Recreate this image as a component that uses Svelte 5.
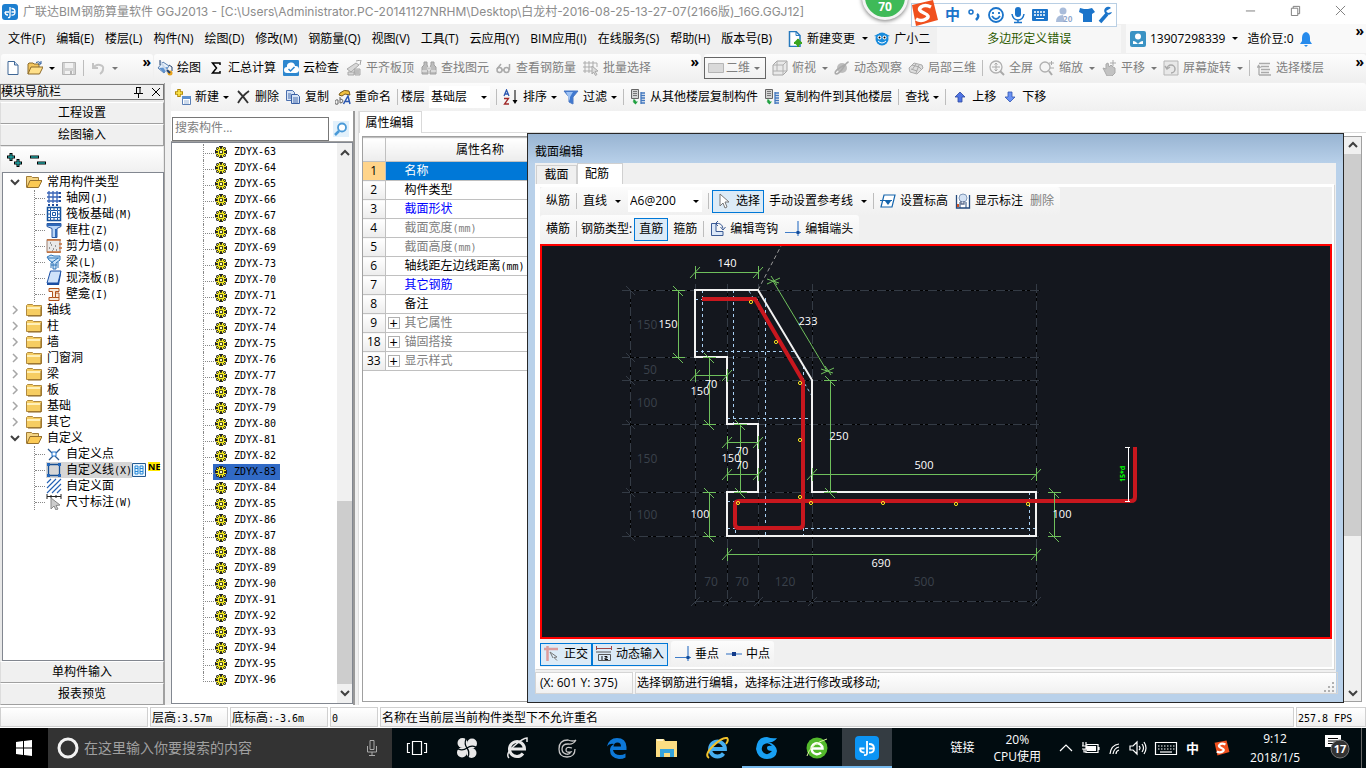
<script>
  const menus = ['文件(F)', '编辑(E)', '楼层(L)', '构件(N)', '绘图(D)', '修改(M)', '钢筋量(Q)', '视图(V)', '工具(T)', '云应用(Y)', 'BIM应用(I)', '在线服务(S)', '帮助(H)', '版本号(B)'];

  const icons = {
    logo: '<rect width="16" height="16" rx="3" fill="#1d7fd0"/><path d="M8 3v9q0 2-2 1.500M3 8h4M3 8q0 3 3 3M9.500 8H13M9.500 4.500Q13 4.500 13 8t-3.500 3" fill="none" stroke="#fff" stroke-width="1.300"/>',
    page: '<path d="M3 1.500h6.500L13 5v9.500H3z" fill="#fff" stroke="#3f6796"/><path d="M9.500 1.500V5H13" fill="#cfe0f3" stroke="#3f6796"/>',
    open: '<path d="M1 14V4l1-1h4l1 1h5v3" fill="#f3c65e" stroke="#8c6a2b"/><path d="M1 14l3-7h12l-3.500 7z" fill="#ffe08a" stroke="#8c6a2b"/><path d="M9 2.500q3-2 5 1M14 1v3h-3" fill="none" stroke="#2e5f9e"/>',
    save: '<path d="M1.500 2.500h13v12h-13z" fill="#d2d2d2" stroke="#b5b5b5"/><path d="M4 3h8v5H4zM4 11h8v3H4z" fill="#f2f2f2"/><path d="M9 11h2v3H9z" fill="#b5b5b5"/>',
    undo: '<path d="M3 3v5h5M3 8q3-4 7-3t3 4q0 3-3 5" fill="none" stroke="#c4c4c4" stroke-width="2"/>',
    draw: '<path d="M6 2l6 4-5 7-6-5z" fill="#e6f0fa" stroke="#5a80b0"/><path d="M2 8l9-1-4 6z" fill="#5d92d0"/><path d="M3 1l8 12" stroke="#c9d8ea" stroke-width="2"/><path d="M3 0v5M12 5l3 2v4" stroke="#25436e" fill="none"/><circle cx="13" cy="13" r="2.500" fill="#e8a21a"/><path d="M10 10l3 3" stroke="#25436e" stroke-width="2"/>',
    sigma: '<path d="M12 5V3H4.500L8.500 8l-4 5H12v-2" fill="none" stroke="#000" stroke-width="1.500"/>',
    cloud: '<rect width="16" height="16" rx="1" fill="#2d87cf"/><path d="M4 13a3 3 0 0 1 0-6 4 4 0 0 1 8-1 3.500 3.500 0 0 1 1 7z" fill="#fff"/><path d="M5.500 9l2 2 4-4" fill="none" stroke="#2d87cf" stroke-width="1.500"/>',
    flush: '<path d="M1 9l9-6 3 2-8 7zM2 12h6v3H2zM8 9h6v6H9z" fill="#d8d8d8" stroke="#a8a8a8"/><path d="M10 1l5-1-1 5M10 10v4M12 10v4" stroke="#a0a0a0" fill="none"/>',
    find: '<path d="M3 2h3v3l1 2v7H1V7l2-2zM10 2h3v3l2 2v7H9V7l1-2z" fill="#bdbdbd" stroke="#a0a0a0"/><path d="M7 7h2v3H7zM1 11h5M10 11h5" fill="#999" stroke="#f5f5f5"/>',
    glasses: '<circle cx="3.500" cy="10" r="2.500" fill="none" stroke="#aaa" stroke-width="1.500"/><circle cx="10.500" cy="10" r="2.500" fill="none" stroke="#aaa" stroke-width="1.500"/><path d="M6 10h2M1 9l4-5M13.500 10V4" fill="none" stroke="#aaa" stroke-width="1.500"/>',
    batch: '<path d="M2 1v12M6 1v12M10 1v9M0 3h14M0 7h10M0 11h9M14 3v4" stroke="#adadad" fill="none"/><path d="M9 6l6 5-3 .5 2 3-1.500 1-2-3.500L9 14z" fill="#ddd" stroke="#aaa"/>',
    rect: '<path d="M.5 3.500h15v9H.5z" fill="#d9d9d9" stroke="#b5b5b5"/>',
    cube: '<path d="M1 5l4-4h10v10l-4 4H1z" fill="#e9e9e9" stroke="#a5a5a5"/><path d="M1 5h10v10M11 5l4-4M5 1v10H1M5 11h10" fill="none" stroke="#b0b0b0"/>',
    orbit: '<circle cx="8" cy="8" r="5" fill="#bdbdbd"/><path d="M2 14q-3-2 5-7t7-5-5 6-7 6z" fill="none" stroke="#aaa" stroke-width="1.500"/>',
    part3d: '<path d="M1 8l5-5 8 2 1 3-6 6-7-2z" fill="#ddd" stroke="#aaa"/><path d="M4 5l7 2 3 3M3 9l6 2M8 4L4 10M11 5l-3 8" stroke="#a8a8a8" fill="none"/>',
    full: '<circle cx="7" cy="7" r="6" fill="#f5f5f5" stroke="#b0b0b0" stroke-width="1.300"/><path d="M7 3v8M3 7h8M5.500 4.500L7 3l1.500 1.500M5.500 9.500L7 11l1.500-1.500" stroke="#aaa" fill="none"/><path d="M11 11l4 4" stroke="#aaa" stroke-width="2"/>',
    zoom: '<circle cx="6" cy="7" r="5" fill="#f5f5f5" stroke="#b0b0b0" stroke-width="1.300"/><path d="M10 11l3 4" stroke="#aaa" stroke-width="2"/><path d="M10 3h5M12.500 1v4M11 8h4" stroke="#aaa"/>',
    pan: '<path d="M2 8l3 1V4l2-1 1 4 2-2 2 2 2 1v5l-3 3H6z" fill="#c2c2c2" stroke="#aaa"/><path d="M12 0v6M9 3h6" stroke="#aaa"/>',
    rotate: '<path d="M1 1h14v14H1z" fill="#e8e8e8" stroke="#b5b5b5"/><path d="M4 9a4 4 0 1 1 4 4M2 6l2 3 3-2" fill="none" stroke="#aaa" stroke-width="1.500"/>',
    floors: '<path d="M3 3.500h11M1 7h3l-2-2M5 6.500h8M5 9.500h9M5 12.500h8M3 15h12M3 7v8" stroke="#aaa" fill="none" stroke-width="1.300"/>',
    create: '<path d="M4 0v8M0 4h8" stroke="#b28a08" stroke-width="3.500"/><path d="M4 1v6M1 4h6" stroke="#ffe84a" stroke-width="1.600"/><path d="M7.500 7.500h8v8h-8z" fill="#fff" stroke="#5b7fb5"/><path d="M7 7h9v3H7z" fill="#5b8fd0"/><path d="M9 12h5M9 14h5" stroke="#9ab5d8"/>',
    cross: '<path d="M3 2q5 5 10 12M14 2Q7 7 3 14" stroke="#333" stroke-width="1.800" fill="none"/>',
    copy: '<path d="M1.500 1.500h6l2 2v8h-8z" fill="#d6e4f7" stroke="#4a6fae"/><path d="M6.500 5.500h6l2 2v7h-8z" fill="#d6e4f7" stroke="#3a60a4"/><path d="M8 9h5M8 11h5M8 13h5M3 5h3M3 7h3M3 9h3" stroke="#4a6fae"/>',
    rename: '<path d="M5 4q4-4 9-2l1 4-5-1-3 2-3-1z" fill="#f0c040" stroke="#7a5a1a"/><path d="M0 14q0-4 3-3v4q-3 1-3-1M5 8v6q3 0 3-2t-3-2" fill="none" stroke="#666"/><path d="M8.500 15l4.500-8 2 8M10.500 12.500h4" fill="none" stroke="#2a57b0" stroke-width="1.500"/>',
    sort: '<path d="M1 7l2.500-6L6 7M2 5h3" fill="none" stroke="#2a57b0" stroke-width="1.300"/><path d="M1 9.500h4.500L1.500 15h4.500" fill="none" stroke="#a02828" stroke-width="1.300"/><path d="M12 1v11" stroke="#000"/><path d="M9.500 11h5L12 15z"/>',
    filter: '<path d="M1 2h14l-5 6v7l-4-2V8z" fill="#3f78d0" stroke="#4a78c4"/><path d="M3 3h7L7 8v4" fill="#9dc2f4"/>',
    fcopy: '<path d="M1.500.5h7v9h-7z" fill="#d4d4d4" stroke="#666"/><path d="M3 2.500h4M3 4.500h4M3 6.500h4" stroke="#777"/><path d="M11 3v12M11 4h4M11 6.500h4M11 9h4M11 11.500h4M11 14h4" stroke="#4277be" stroke-width="1.300"/><path d="M3 10.500h2l1 2h2l-2.500 3-3-3h1z" fill="#20a040"/>',
    up: '<path d="M8 3l5 5h-3v5H6V8H3z" fill="#4f74e4" stroke="#2d499e" stroke-width=".8"/>',
    down: '<path d="M8 13L3 8h3V3h4v5h3z" fill="#6a92f4" stroke="#3457ae" stroke-width=".8"/>',
    newchg: '<path d="M2.500.5H9l4 4v11H2.500z" fill="#fff" stroke="#2779bd" stroke-width="1.500"/><path d="M9 .5v4h4" fill="none" stroke="#2779bd"/><path d="M11 7.500l4 4-4 4-4-4z" fill="#3ca51e"/><path d="M11 8v8M7 12h8" stroke="#3ca51e" stroke-width="2"/>',
    owl: '<circle cx="8" cy="8" r="6.500" fill="#188bdc"/><path d="M0 5l4-2v3zM16 5l-4-2v3z" fill="#188bdc"/><circle cx="5.500" cy="6.500" r="2" fill="#fff"/><circle cx="10.500" cy="6.500" r="2" fill="#fff"/><circle cx="5.500" cy="6.500" r="1"/><circle cx="10.500" cy="6.500" r="1"/><path d="M4 10q4 4 8 0" stroke="#fff" fill="none"/>',
    user: '<rect width="16" height="16" rx="2" fill="#3b93c4"/><circle cx="8" cy="5.500" r="3" fill="#fff"/><path d="M3 10l5 1 5-1v3H3z" fill="#fff"/><path d="M5 10l3 3 3-3" fill="#3b93c4"/>',
    bell: '<path d="M8 1q4 1 4 6v3l2 3H2l2-3V7q0-5 4-6z" fill="#278bec"/><path d="M6 14h4l-2 2z" fill="#278bec"/>',
    search: '<path d="M0 0h16v16H0z" fill="#e3f1fb"/><circle cx="9" cy="6.500" r="4" fill="#fff" stroke="#4a9ad8" stroke-width="1.800"/><path d="M6 10l-4 4" stroke="#4a9ad8" stroke-width="2.500"/>',
    folder: '<path d="M.5 13.500v-10l1-1h5l1 1h8v10z" fill="#f6cd62" stroke="#b08a40"/><path d="M1 5h14v2H1z" fill="#fff0b8"/><path d="M15 5v9H2" fill="none" stroke="#8b6520"/>',
    folderOpen: '<path d="M.5 13.500v-11h5l1 1h6v3" fill="#f4d483" stroke="#a17c37"/><path d="M1 13.500l3-7h12l-3.500 7z" fill="#fbc954" stroke="#94702f"/>',
    grid: '<path d="M1 3h12M1 7h12M1 11h12M3 1v12M7 1v12M11 1v12" stroke="#3a66b8" stroke-width="1.300"/><path d="M2 15h2M6 15h2M10 15h2M14 2v2M14 6v2M14 10v2" stroke="#204c9c" stroke-width="2"/>',
    raft: '<path d="M1.500 1.500h13v13h-13z" fill="#fff" stroke="#12509c" stroke-width="1.500"/><path d="M4.500 4.500h7v7h-7zM6.500 6.500h3v3h-3zM4.500 1v3M8 1v3M11.500 1v3M4.500 12v3M8 12v3M11.500 12v3M1 4.500h3M1 8h3M1 11.500h3M12 4.500h3M12 8h3M12 11.500h3" fill="none" stroke="#1d5ca8"/>',
    column: '<path d="M1 1.500h14v3l-4 2v9H6v-9l-5-2z" fill="#b9d5f6" stroke="#2a5aa4"/><path d="M1 2h14v2H1zM9 7h2v8H9z" fill="#2f69b8"/>',
    wall: '<path d="M1 1.500h13v13H1z" fill="#e9e9e9" stroke="#9b7c6c"/><path d="M3 10h1M5 7h1M7 11h1M9 8h1M6 13h1M10 12h1M4 5h1" stroke="#444"/><path d="M1 2h14M1 14h14M13 6h3M13 10h3" stroke="#c7703a" stroke-width="1.300"/>',
    beam: '<path d="M1 3l4-2 3 1h6v4l-4 3v6H7V9L3 6z" fill="#c8e2f8" stroke="#2c74b8"/><path d="M2 4h11M12 4L5 9v5M12 8v6M5 11h6" stroke="#2c74b8" fill="none"/>',
    slab: '<path d="M4.500 1H15l-3 12H1z" fill="#cfe2fa" stroke="#1a4fa4"/><path d="M1 13h11l3-12v3l-2 11H1z" fill="#1a4fa4"/>',
    niche: '<path d="M3 2.500h10v3H9.500v1.500H13v7.500H3v-3h3.500v-6H3z" fill="#f8ead8" stroke="#b0521a"/><path d="M6.500 11.500H13M9.500 7v4" stroke="#b0521a"/>',
    cpoint: '<path d="M2 3l4 4M14 3l-4 4M3 14l4-4M13 14l-4-4" stroke="#2c5a90" stroke-width="1.300"/><path d="M6 6h4v4H6z" fill="#fff" stroke="#2277d0"/>',
    cline: '<path d="M2.500 2.500h11v11h-11z" fill="none" stroke="#174f94" stroke-width="1.300"/><path d="M1 1h3v3H1zM12 1h3v3h-3zM1 12h3v3H1zM12 12h3v3h-3z" fill="#2568bc"/>',
    cface: '<path d="M1 5l4-4M1 10l9-9M1 15L15 1M6 15l9-9M11 15l4-4" stroke="#2360b4" stroke-width="1.100"/>',
    dimw: '<path d="M1 0v5M1 2.500h14M15 0v5M5 1v3M10 1v3" stroke="#222"/><path d="M5 4l9 7-4 .5 2 3.500-2 1-2-4-3 3z" fill="#ccc" stroke="#888"/>',
    gear: '<path d="M6 2h4v1.500l2-.5 1 1-.5 2H14v4h-1.500l.5 2-1 1-2-.5V14H6v-1.500L4 13l-1-1 .5-2H2V6h1.500L3 4l1-1 2 .5z" fill="#222"/><path d="M6 3h1v2H6zM9 3h1v2H9zM6 11h1v2H6zM9 11h1v2H9zM3 6h2v1H3zM3 9h2v1H3zM11 6h2v1h-2zM11 9h2v1h-2zM4 4h1v1H4zM11 4h1v1h-1zM4 11h1v1H4zM11 11h1v1h-1z" fill="#f6ee20"/><path d="M5.500 5.500h5v5h-5z" fill="none" stroke="#f6ee20" stroke-width="1.300"/><path d="M7 7h2v2H7z" fill="#fffbc0"/>',
    arrow: '<path d="M4 1v12l3-3 2 5 2-1-2-5h4z" fill="#fff" stroke="#777"/>',
    elev: '<path d="M4 2h11l-3 12H1z" fill="#fff" stroke="#1464ac" stroke-width="1.200"/><path d="M0 7.500h12" stroke="#1464ac"/><path d="M5 8h6l-3 4z" fill="#1464ac"/>',
    showdim: '<path d="M1.500 2v13h13V2" fill="#fff" stroke="#254a7c" stroke-width="1.300"/><path d="M5 9v6M11 9v6" stroke="#254a7c"/><circle cx="8" cy="5" r="4" fill="#d4e2f4" stroke="#8098b8"/><path d="M6 8v3h3V8" fill="none" stroke="#607090" stroke-width="1.300"/><path d="M2 11h2v3H2z" fill="#d05020"/>',
    hook: '<path d="M1.500 2.500H6v8h7v4H1.500z" fill="#dce8f8" stroke="#3b5a94"/><path d="M6 2.500q6-1 7 5M10.500 6l2.500 3 2.500-3M8 0L5.500 2.500 8 5" fill="none" stroke="#3b5a94"/>',
    perp: '<path d="M13 0v15M0 11.500h16" stroke="#3f7cc8" stroke-width="1.200"/><path d="M11.500 10h3v3h-3z" fill="#134c9a"/>',
    mid: '<path d="M0 8h16" stroke="#5a8ccc" stroke-width="1.300"/><path d="M6 6h4v4H6z" fill="#123a8a"/>',
    ortho: '<path d="M0 3h14M3.500 0v15" stroke="#dc9c9c" stroke-width="2.500"/><path d="M6 6l7 5-3 .5 3 3M6 6l3 6" fill="none" stroke="#777"/>',
    dyn: '<path d="M.5 0v4M.5 2.500h15M15.500 0v4" stroke="#a04444"/><path d="M0 6h15M2.500 8.500h12v6h-12z" fill="none" stroke="#555"/><path d="M6 10v4M8.500 10.500H11v1.500H9v1.500h3" stroke="#111" fill="none"/>'
  };

  const drawTools = [['draw', '绘图'], ['sigma', '汇总计算'], ['cloud', '云检查'], ['flush', '平齐板顶', 1], ['find', '查找图元', 1], ['glasses', '查看钢筋量', 1], ['batch', '批量选择', 1]];

  const parts = [['grid', '轴网', '(J)'], ['raft', '筏板基础', '(M)'], ['column', '框柱', '(Z)'], ['wall', '剪力墙', '(Q)'], ['beam', '梁', '(L)'], ['slab', '现浇板', '(B)'], ['niche', '壁龛', '(I)']];
  const folders = ['轴线', '柱', '墙', '门窗洞', '梁', '板', '基础', '其它'];
  const custom = [['cpoint', '自定义点', ''], ['cline', '自定义线', '(X)'], ['cface', '自定义面', ''], ['dimw', '尺寸标注', '(W)']];
  const members = [63, 64, 65, 66, 67, 68, 69, 73, 70, 71, 72, 74, 75, 76, 77, 78, 79, 80, 81, 82, 83, 84, 85, 86, 87, 88, 89, 90, 91, 92, 93, 94, 95, 96];
  let selected = $state(83);

  const props = [
    [1, '名称', '', 'sel'], [2, '构件类型', '', ''], [3, '截面形状', '', 'blue'], [4, '截面宽度', '(mm)', 'dim'], [5, '截面高度', '(mm)', 'dim'],
    [6, '轴线距左边线距离', '(mm)', ''], [7, '其它钢筋', '', 'blue'], [8, '备注', '', ''], [9, '其它属性', '', 'dim group'], [18, '锚固搭接', '', 'dim group'], [33, '显示样式', '', 'dim group']
  ];

  const gx = [695, 727, 758, 812, 1036];
  const gy = [290, 357, 380, 424, 492, 536];
  const greyText = [[647, 325, '150'], [650, 370, '50'], [647, 403, '100'], [647, 459, '150'], [647, 515, '100'], [711, 582, '70'], [742, 582, '70'], [785, 582, '120'], [924, 582, '500']];
  const hDims = [[695, 758, 272], [695, 727, 375], [727, 758, 442], [727, 758, 474], [812, 1036, 474], [727, 1036, 554]];
  const vDims = [[678, 290, 357], [709, 357, 424], [740, 424, 492], [830, 380, 492], [709, 492, 536], [1054, 492, 536]];
  const dimText = [[727, 263, '140'], [668, 324, '150'], [700, 391, '150'], [711, 384, '70'], [731, 458, '150'], [742, 451, '70'], [742, 465, '70'], [924, 465, '500'], [839, 436, '250'], [700, 514, '100'], [1062, 514, '100'], [881, 563, '690'], [808, 321, '233']];
  const dots = [[751, 302], [776, 342], [800, 383], [800, 440], [800, 497], [738, 503], [811, 503], [883, 503], [956, 504], [1028, 504]];
</script>

{#snippet icon(name)}
  <svg class="ic" viewBox="0 0 16 16" aria-hidden="true">{@html icons[name]}</svg>
{/snippet}

{#snippet tool(name, label, off, caret)}
  <button class="tool" class:off>
    {#if name}{@render icon(name)}{/if}<span>{label}</span>{#if caret}<i class="caret"></i>{/if}
  </button>
{/snippet}

{#snippet chevron(dir)}
  <svg class="chev" viewBox="0 0 10 10" aria-hidden="true"><path d={dir === 'up' ? 'M1 7l4-4 4 4' : dir === 'down' ? 'M1 3l4 4 4-4' : 'M3 1l4 4-4 4'} /></svg>
{/snippet}

<div class="app">
  <header class="title">
    {@render icon('logo')}
    <span>广联达BIM钢筋算量软件 GGJ2013 - [C:\Users\Administrator.PC-20141127NRHM\Desktop\白龙村-2016-08-25-13-27-07(2166版)_16G.GGJ12]</span>
    <div class="winbtns">
      <button aria-label="最小化"><svg viewBox="0 0 12 12"><path d="M1 6.500h10" /></svg></button>
      <button aria-label="还原"><svg viewBox="0 0 12 12"><path d="M1.500 3.500h7v8h-7zM3.500 3.500v-2h7v8h-2" /></svg></button>
      <button aria-label="关闭"><svg viewBox="0 0 12 12"><path d="M1 1l10 10M11 1L1 11" /></svg></button>
    </div>
  </header>

  <div class="ball">70</div>
  <div class="ime">
    <svg viewBox="0 0 208 28" width="208" height="28">
      <path d="M1 5l21-5 5 20-22 6z" fill="#f0501e" />
      <path d="M20 7q-6-3-10 0t3 6 2 6-10 0" fill="none" stroke="#fff" stroke-width="3.500" />
      <text x="34" y="20" font-size="15" font-weight="700" fill="#1b74ca">中</text>
      <circle cx="60" cy="12" r="2" fill="none" stroke="#1b74ca" stroke-width="1.500" /><path d="M66 14q3 2-1 6" fill="none" stroke="#1b74ca" stroke-width="2.500" />
      <g fill="none" stroke="#1b74ca" stroke-width="1.800"><circle cx="85" cy="15" r="7" /><path d="M81 16q4 6 8 0M82 12v2M88 12v2" /></g>
      <rect x="104" y="7" width="6" height="10" rx="3" fill="#1b74ca" /><path d="M101 14q1 6 6 6t6-6M107 20v3M103 22.500h8" fill="none" stroke="#1b74ca" stroke-width="1.500" />
      <rect x="121" y="9" width="16" height="12" rx="1" fill="#1b74ca" /><path d="M123 12h12M123 15h12" stroke="#fff" stroke-width="1.300" stroke-dasharray="2 1" /><path d="M125 18.500h8" stroke="#fff" />
      <circle cx="152" cy="11" r="3.500" fill="#a9bcda" /><path d="M145 22q0-7 7-7l2 7z" fill="#a9bcda" /><text x="152" y="22" font-size="8" font-weight="700" fill="#8fa6cc">20</text>
      <path d="M171 8l4 1h4l4-1 3 4-3 2v8h-9v-8l-4-2z" fill="#1b74ca" transform="translate(-2)" />
      <path d="M189 22l7-8" stroke="#1b74ca" stroke-width="3.500" /><path d="M200 8a4 4 0 1 0 1 4l-4 1-2-2z" fill="#1b74ca" />
    </svg>
  </div>

  <nav class="menu">
    {#each menus as m}<button>{m}</button>{/each}
    <div class="extras">
      <button class="wi">{@render icon('newchg')}<span>新建变更</span><i class="caret"></i></button>
      <button class="wi">{@render icon('owl')}<span>广小二</span></button>
    </div>
    <span class="error">多边形定义错误</span>
    <div class="account">
      <button class="wi">{@render icon('user')}<span>13907298339</span><i class="caret"></i></button>
      <button class="wi"><span>造价豆:0</span>{@render icon('bell')}</button>
      <b class="more">»</b>
    </div>
  </nav>

  <div class="bar upper">
    <div class="seg first">
      <button class="tool" aria-label="新建">{@render icon('page')}</button>
      <button class="tool" aria-label="打开">{@render icon('open')}<i class="caret"></i></button>
      <button class="tool off" aria-label="保存">{@render icon('save')}</button>
      <i class="sep"></i>
      <button class="tool off" aria-label="撤销">{@render icon('undo')}<i class="caret"></i></button>
      <b class="more">»</b>
    </div>
    <div class="seg second">
      {#each drawTools as [n, l, o]}{@render tool(n, l, o, false)}{/each}
      <b class="more">»</b>
    </div>
    <div class="seg third">
      <button class="tool off boxed">{@render icon('rect')}<span>二维</span><i class="caret"></i></button>
      {@render tool('cube', '俯视', true, true)}
      {@render tool('orbit', '动态观察', true, false)}
      {@render tool('part3d', '局部三维', true, false)}
      <i class="sep"></i>
      {@render tool('full', '全屏', true, false)}
      {@render tool('zoom', '缩放', true, true)}
      {@render tool('pan', '平移', true, true)}
      {@render tool('rotate', '屏幕旋转', true, true)}
      <i class="sep"></i>
      {@render tool('floors', '选择楼层', true, false)}
      <b class="more">»</b>
    </div>
  </div>

  <main>
    <aside class="nav">
      <div class="navhead">
        <span>模块导航栏</span>
        <svg viewBox="0 0 28 12" width="28" height="12"><path d="M3 1.500h5M3.500 1v6M7 1v6M1 7.500h9M5.500 8v4M19 2l8 8M27 2l-8 8" fill="none" stroke="#000" /></svg>
      </div>
      <button class="wide">工程设置</button>
      <button class="wide">绘图输入</button>
      <div class="plus">
        <svg viewBox="0 0 42 16" width="42" height="16"><path d="M1 5h8M5 1v8M8 11h8M12 7v8M24 5h9M31 11h9" stroke="#000" stroke-width="3" /><path d="M2 5h6M5 2v6M9 11h6M12 8v6M25 5h7M32 11h7" stroke="#20a0a0" stroke-width="1.300" /></svg>
      </div>
      <div class="tree">
        <div class="row">{@render chevron('down')}{@render icon('folderOpen')}<span>常用构件类型</span></div>
        <div class="kids">
          {#each parts as [n, l, k]}<div class="row">{@render icon(n)}<span>{l}<code>{k}</code></span></div>{/each}
        </div>
        {#each folders as f}<div class="row closed">{@render chevron('right')}{@render icon('folder')}<span>{f}</span></div>{/each}
        <div class="row">{@render chevron('down')}{@render icon('folderOpen')}<span>自定义</span></div>
        <div class="kids">
          {#each custom as [n, l, k], i}
            <div class="row">
              <span class="lab" class:cur={i === 1}>{@render icon(n)}<span>{l}<code>{k}</code></span></span>
              {#if i === 1}<svg viewBox="0 0 14 14" class="mini"><path d="M.5.5h13v13H.5z" fill="#eaf5fd" stroke="#245a90" /><path d="M3 3h3v8H3zM8 3h3v8H8zM3 5.500h3M3 8.500h3M8 5.500h3M8 8.500h3" fill="none" stroke="#2588d8" /></svg><em>NE</em>{/if}
            </div>
          {/each}
        </div>
      </div>
      <button class="wide">单构件输入</button>
      <button class="wide">报表预览</button>
    </aside>

    <div class="work">
      <div class="bar lower">
        {@render tool('create', '新建', false, true)}
        {@render tool('cross', '删除', false, false)}
        {@render tool('copy', '复制', false, false)}
        {@render tool('rename', '重命名', false, false)}
        <i class="sep"></i>
        <label for="floor">楼层</label>
        <span class="combo"><select id="floor"><option>基础层</option></select><i class="caret"></i></span>
        <i class="sep"></i>
        {@render tool('sort', '排序', false, true)}
        {@render tool('filter', '过滤', false, true)}
        <i class="sep"></i>
        {@render tool('fcopy', '从其他楼层复制构件', false, false)}
        {@render tool('fcopy', '复制构件到其他楼层', false, false)}
        <i class="sep"></i>
        {@render tool('', '查找', false, true)}
        <i class="sep"></i>
        {@render tool('up', '上移', false, false)}
        {@render tool('down', '下移', false, false)}
      </div>
      <div class="cols">
        <section class="members">
          <div class="find"><input type="text" placeholder="搜索构件..." aria-label="搜索构件" /><button aria-label="搜索">{@render icon('search')}</button></div>
          <div class="listbox">
            <ul>
              {#each members as m}<li><button class:cur={m === selected} onclick={() => (selected = m)}>{@render icon('gear')}<span>ZDYX-{m}</span></button></li>{/each}
            </ul>
            <div class="scroll">{@render chevron('up')}<div class="track"><div class="thumb"></div></div>{@render chevron('down')}</div>
          </div>
        </section>

        <section class="attrs">
          <div class="tabline"><button class="proptab">属性编辑</button></div>
          <div class="sheet">
            <table>
              <colgroup><col class="c1" /><col class="c2" /><col /></colgroup>
              <thead><tr><th></th><th>属性名称</th><th></th></tr></thead>
              <tbody>
                {#each props as [n, l, u, c]}
                  <tr class={c}><th scope="row">{n}</th><td>{#if c.includes('group')}<i class="exp">+</i>{/if}{l}<code>{u}</code></td><td></td></tr>
                {/each}
              </tbody>
            </table>
            <div class="scroll outer">{@render chevron('up')}<div class="track"></div>{@render chevron('down')}</div>
          </div>
        </section>
      </div>
    </div>

    <section class="dialog">
      <h2>截面编辑</h2>
      <div class="inner">
        <div class="tabs"><button>截面</button><button class="on">配筋</button></div>
        <div class="pane">
          <div class="bar d1">
            {@render tool('', '纵筋', false, false)}
            <i class="sep"></i>
            {@render tool('', '直线', false, true)}
            <span class="combo spec"><select aria-label="钢筋规格"><option>A6@200</option></select><i class="caret"></i></span>
            <i class="sep"></i>
            <button class="tool pressed">{@render icon('arrow')}<span>选择</span></button>
            {@render tool('', '手动设置参考线', false, true)}
            <i class="sep"></i>
            {@render tool('elev', '设置标高', false, false)}
            {@render tool('showdim', '显示标注', false, false)}
            {@render tool('', '删除', true, false)}
          </div>
          <div class="bar d2">
            {@render tool('', '横筋', false, false)}
            <i class="sep"></i>
            <span>钢筋类型:</span>
            <button class="tool pressed">直筋</button>
            {@render tool('', '箍筋', false, false)}
            <i class="sep"></i>
            {@render tool('hook', '编辑弯钩', false, false)}
            {@render tool('perp', '编辑端头', false, false)}
          </div>
          <div class="canvas">
            <svg viewBox="542 246 788 391" preserveAspectRatio="xMinYMin meet">
              <g class="axis">
                {#each gx as x}<path class="k" d="M{x}.5 284V606" /><path class="g" d="M{x}.5 284V606" /><path class="t" d="M{x - 4} 606l9-9" />{/each}
                {#each gy as y}<path class="k" d="M622 {y}.5H1040" /><path class="g" d="M622 {y}.5H1040" /><path class="t" d="M626 {y - 4}l9 9" />{/each}
                <path class="k" d="M630.500 290V536M695 601.500H1036" /><path class="g" d="M630.500 290V536M695 601.500H1036" />
              </g>
              {#each greyText as [x, y, s]}<text class="gt" {x} y={y + 4}>{s}</text>{/each}
              <path d="M758 290L781 246" stroke="#999" stroke-dasharray="4 3" />
              <path class="blue" d="M702.500 290V355M733.500 290V424M765.500 298V536M695 299.500H760M695 351.500H795M727 418.500H812M727 528.500H1036M735.500 500V536M803.500 492V536M1029.500 492V536M727 501.500H736M749 291L812 396M803.500 366V380" />
              <path d="M695 290H758L812 380V492H1036V536H727V492H758V424H727V357H695Z" fill="none" stroke="#f2f2f2" stroke-width="2" />
              <path d="M702 299H755L803 381V524q0 4-4 4H739q-4 0-4-4V505q0-4 4-4H1131q4 0 4-4V447" fill="none" stroke="#c8171e" stroke-width="4" />
              <g class="green">
                {#each hDims as [a, b, y]}<path d="M{a} {y}.5H{b}M{a}.5 {y - 6}v13M{b}.5 {y - 6}v13M{a - 5} {y + 6}l10-11M{b - 5} {y + 6}l10-11" />{/each}
                {#each vDims as [x, a, b]}<path d="M{x}.5 {a}V{b}M{x - 6} {a}.5h13M{x - 6} {b}.5h13M{x - 5} {a - 4}l10 10M{x - 5} {b - 4}l10 10" />{/each}
                <path d="M773 281L827 371M767 284l13-6M771 276l6 9M767 279l12 4M821 374l13-6M825 366l6 9M821 369l12 4" />
              </g>
              {#each dots as [cx, cy]}<circle {cx} {cy} r="1.600" fill="none" stroke="#f8e420" />{/each}
              {#each dimText as [x, y, s]}<text class="wt" {x} y={y + 4}>{s}</text>{/each}
              <path d="M1128.500 447V501M1125 447.500h5M1125 501.500h5" stroke="#fff" fill="none" />
              <text transform="translate(1125 482) rotate(-90)" font-size="7" font-weight="700" fill="#0f0">15*d</text>
            </svg>
          </div>
          <div class="snap">
            <button class="tool pressed">{@render icon('ortho')}<span>正交</span></button>
            <button class="tool pressed">{@render icon('dyn')}<span>动态输入</span></button>
            <div class="bar d3">
              {@render tool('perp', '垂点', false, false)}
              {@render tool('mid', '中点', false, false)}
            </div>
          </div>
        </div>
        <div class="dstatus"><span>(X: 601 Y: 375)</span><span>选择钢筋进行编辑，选择标注进行修改或移动;</span>
          <svg viewBox="0 0 12 12" width="12" height="12"><path d="M8 0h2v2H8zM4 4h2v2H4zM8 4h2v2H8zM0 8h2v2H0zM4 8h2v2H4zM8 8h2v2H8z" fill="#b0b0b0" /></svg>
        </div>
      </div>
    </section>
  </main>

  <footer class="status">
    <span class="s1"></span><span class="s2">层高<code>:3.57m</code></span><span class="s3">底标高<code>:-3.6m</code></span><span class="s4"><code>0</code></span><span class="s5">名称在当前层当前构件类型下不允许重名</span><span class="s6"><code>257.8 FPS</code></span>
  </footer>

  <div class="taskbar">
    <button class="start" aria-label="开始"><svg viewBox="0 0 16 16" width="16" height="16"><path d="M0 2l7-1v6.500H0zM8 1l8-1v7.500H8zM0 8.500h7V15l-7-1zM8 8.500h8V16l-8-1z" fill="#fff" /></svg></button>
    <label class="cortana"><svg viewBox="0 0 22 22" width="22" height="22"><circle cx="11" cy="11" r="9" fill="none" stroke="#f2f2f2" stroke-width="3" /></svg><input type="text" placeholder="在这里输入你要搜索的内容" /><svg viewBox="0 0 12 18" width="12" height="18"><path d="M4 1.500h4v9H4zM1.500 7v6h9V7M6 13v3.500M3 16.500h6" fill="none" stroke="#aaa" /></svg></label>
    <div class="apps">
      <button aria-label="任务视图"><svg viewBox="0 0 24 24"><path d="M7.500 5.500h9v13h-9zM5 7.500H2.500v9H5M19 7.500h2.500v9H19" fill="none" stroke="#fff" stroke-width="1.200" /></svg></button>
      <button aria-label="风扇"><svg viewBox="0 0 24 24"><g fill="#e8e8e8"><circle cx="7.500" cy="7" r="5" /><circle cx="17" cy="7.500" r="5" /><circle cx="7" cy="16.500" r="5" /><circle cx="16.500" cy="17" r="5" /><path d="M8 8h8v8H8z" /></g><path d="M12 12q-3-4-1-9M12 12q4-3 9-1M12 12q3 4 1 9M12 12q-4 3-9 1" fill="none" stroke="#010c10" stroke-width="1.300" /></svg></button>
      <button aria-label="浏览器"><svg viewBox="0 0 24 24"><path d="M6 13H19.500A7.500 7.500 0 1 0 18 17.500" fill="none" stroke="#e8e8e8" stroke-width="3" /><path d="M4 22q-4-4 5-12T22 2v4" fill="none" stroke="#e8e8e8" stroke-width="1.500" /></svg></button>
      <button aria-label="广联达"><svg viewBox="0 0 24 24"><path d="M21 4q-3 2-8 0-9 0-9 9 0 8 8 8t8-8M17 12q-6-2-6 2 0 3 5 2-2 3-5 2-4-1-4-5 0-5 6-5 5 1 8-4" fill="none" stroke="#c8c8c8" stroke-width="1.300" /></svg></button>
      <button aria-label="Edge"><svg viewBox="0 0 24 24"><path d="M2 10.500Q4 2 12 2q9 0 9.500 9v3H8q1 5 7 5 3 0 5.500-1.500v4Q18 23 14 23q-9-1-9-9 0-4 4-6-5-1-7 2.500zM8.500 10.500H16Q16 6.500 12.500 6.500T8.500 10.500z" fill="#0d78d8" fill-rule="evenodd" /></svg></button>
      <button aria-label="资源管理器"><svg viewBox="0 0 24 24"><path d="M1 3h8l1 2h12v16H1z" fill="#fbdd82" /><path d="M2 4h6" stroke="#fff4c8" stroke-width="2" /><path d="M5 21v-8h14v8h-4v-4H9v4z" fill="#35a4dc" /></svg></button>
      <button aria-label="IE"><svg viewBox="0 0 24 24"><path d="M6 13H20A7.500 7.500 0 1 0 18.500 17.500" fill="none" stroke="#46aef0" stroke-width="3.800" /><path d="M4 22q-5-3 4-12T22 2q2 2-1 6" fill="none" stroke="#f2c32c" stroke-width="2" /></svg></button>
      <button class="run" aria-label="G"><svg viewBox="0 0 24 24"><path d="M22 2q-3 5-9 4 8 2 9 9-1 8-10 8T1 13Q2 1 12 1q5 2 10 1zM8 9q-3 5 1 8t8-2q-5 0-5-3t5-2q-4-5-9-1z" fill="#18a0f4" fill-rule="evenodd" /></svg></button>
      <button class="run" aria-label="360"><svg viewBox="0 0 24 24"><circle cx="12" cy="12" r="10.500" fill="#53b92c" /><path d="M7 12.500h10.500A5.500 5.500 0 1 0 16 16.500" fill="none" stroke="#fff" stroke-width="2.500" /><path d="M2 20Q5 8 22 3" fill="none" stroke="#d9f4a0" /></svg></button>
      <button class="run active" aria-label="GGJ"><svg viewBox="0 0 24 24"><rect width="24" height="24" rx="4" fill="#0c94f4" /><path d="M12 5v12q0 2.500-3 2M4.500 12.500h5M5 12.500q0 4 4.500 4M14 12.500h5M14 8q5 0 5 4.500t-5 4" fill="none" stroke="#fff" stroke-width="1.800" /></svg></button>
    </div>
    <div class="tray">
      <span class="links">链接</span>
      <span class="two">20%<br />CPU使用</span>
      <svg viewBox="0 0 144 20" width="144" height="20">
        <g fill="none" stroke="#fff" stroke-width="1.200"><path d="M2 13l6-6 6 6" /><path d="M28 6.500h12v8H28zM41 9v3M25 4v4M28 4v4M24 8h5v3h-5M26 11v3h2" /><path d="M52 16q1-9 9-10M55 16q1-6 6-7M58 16q0-3 3-4" /><path d="M72 8h3l4-4v12l-4-4h-3zM81 8q2 2 0 4M84 6q3 4 0 8M86 4q4 6 0 12" /><path d="M97.500 4.500h21v12h-21z" /><path d="M100 8h17M100 11h17" stroke-dasharray="1.500 1.500" /><path d="M102 14h12" /></g>
        <path d="M29 8h9v5h-9z" fill="#fff" />
        <text x="128" y="15" font-size="13" font-weight="700" fill="#fff">中</text>
      </svg>
      <svg class="s" viewBox="0 0 28 26" width="16" height="16"><path d="M1 4l21-4 5 20-21 6z" fill="#f0501e" /><path d="M20 7q-6-3-10 0t3 6 2 6-10 0" fill="none" stroke="#fff" stroke-width="4" /></svg>
      <span class="two clock">9:12<br />2018/1/5</span>
      <button class="note" aria-label="通知"><svg viewBox="0 0 28 26" width="28" height="26"><path d="M2 2h16v12h-6l-3 3v-3H2z" fill="#fff" /><path d="M5 5.500h10M5 8h10M5 10.500h8" stroke="#000" /><circle cx="17" cy="16" r="9" fill="#333" stroke="#777" /><text x="17" y="20" text-anchor="middle" font-size="11" font-weight="700" fill="#fff">17</text></svg></button>
      <i class="peek"></i>
    </div>
  </div>
</div>

<style>
  :global(body) { margin: 0; }
  .app { position: relative; display: flex; flex-direction: column; min-height: 100vh; background: #f0f0f0; color: #000; font: 12px/16px "Open Sans", "Noto Sans CJK SC", sans-serif; overflow: hidden; white-space: nowrap; }
  .app * { box-sizing: border-box; }
  button { font: inherit; color: inherit; background: none; border: 0; padding: 0; margin: 0; }
  input, select { font: inherit; }
  code { font: 10px/16px "DejaVu Sans Mono", monospace; }
  .ic { width: 16px; height: 16px; flex: none; }
  .chev { width: 10px; height: 10px; flex: none; fill: none; stroke: #404040; stroke-width: 2; }
  .caret { flex: none; width: 0; height: 0; border: 3px solid transparent; border-top-color: #000; border-bottom: 0; }
  .off .caret { border-top-color: #777; }
  .sep { flex: none; width: 1px; height: 16px; background: #bdbdbd; }
  .more { font-size: 14px; line-height: 12px; align-self: flex-start; }

  .title { display: flex; align-items: center; gap: 5px; height: 24px; padding: 0 3px 0 2px; background: #fff; color: #8c8c8c; font-family: Inter, "Noto Sans CJK SC", sans-serif; }
  .winbtns { margin-left: auto; display: flex; }
  .winbtns button { width: 45px; height: 20px; }
  .winbtns svg { width: 11px; height: 11px; fill: none; stroke: #777; }
  .ball { position: absolute; left: 862px; top: -26px; width: 46px; height: 46px; border-radius: 50%; background: #3fba58; border: 3px solid #f4f4f4; box-shadow: 0 1px 4px #777; color: #fff; font: 700 12px/60px "Open Sans", sans-serif; text-align: center; z-index: 3; }
  .ime { position: absolute; left: 911px; top: 3px; width: 206px; height: 24px; background: #fff; border: 1px solid #b9cfe4; z-index: 2; font-family: "Noto Sans CJK SC", sans-serif; }
  .ime svg { position: absolute; left: -1px; top: -4px; }

  .menu { display: flex; align-items: center; gap: 11px; height: 29px; padding-left: 8px; }
  .wi { display: flex; align-items: center; gap: 4px; }
  .menu .wi .caret { margin-left: 3px; }
  .extras { display: flex; gap: 6px; padding-left: 4px; }
  .error { flex: 1; margin: 0 -6px 0 -4px; padding-left: 50px; height: 28px; line-height: 28px; background: #f7f7f7; color: #2c5a00; }
  .account { display: flex; align-items: center; gap: 9px; height: 29px; width: 240px; padding-left: 4px; background: #f9f9f9; }
  .account .more { margin: 1px 2px 0 auto; }

  .bar { display: flex; align-items: center; background: linear-gradient(#fcfcfc, #f0f0f0); border-radius: 3px; }
  .upper { height: 30px; background: none; }
  .seg { display: flex; align-items: center; gap: 7px; height: 28px; background: linear-gradient(#fdfdfd, #efefef); border-radius: 3px; }
  .first { width: 152px; margin-left: 1px; padding-left: 4px; gap: 6px; }
  .second { width: 547px; margin-left: 1px; padding-left: 3px; }
  .third { flex: 1; margin-left: 3px; gap: 6px; }
  .seg .more { margin: 2px 2px 0 auto; }
  .tool { display: flex; align-items: center; gap: 4px; height: 22px; flex: none; }
  .tool .caret { margin-left: 2px; }
  .off { color: #808080; }
  .boxed { border: 1px solid #666; width: 62px; padding: 0 3px; gap: 2px; }

  main { position: relative; flex: 1; display: flex; min-height: 0; }
  .nav { width: 165px; flex: none; display: flex; flex-direction: column; background: #e8e8e8; border-right: 1px solid #a0a0a0; padding-top: 1px; }
  .navhead { display: flex; justify-content: space-between; align-items: center; height: 16px; margin-bottom: 2px; border: 1px solid #777; padding-right: 2px; line-height: 14px; background: #f0f0f0; }
  .wide { height: 22px; border: 1px solid #a0a0a0; border-top-color: #fff; border-left-color: #ddd; background: #f0f0f0; text-align: center; flex: none; }
  .plus { height: 25px; margin: 1px 1px 0; padding: 5px 5px 4px; background: linear-gradient(#fff, #f0f0f0); }
  .tree { flex: 1; background: #fff; border: 1px solid #828790; margin: 0 0 0 2px; padding-top: 1px; }
  .row { display: flex; align-items: center; height: 16px; gap: 6px; padding-left: 7px; }
  .row > .ic { margin-right: -1px; }
  .closed .chev { stroke: #a6a6a6; stroke-width: 1.500; }
  .kids { margin-left: 31px; border-left: 1px dotted #888; }
  .kids .row { padding-left: 11px; gap: 4px; position: relative; }
  .kids .row > .ic { margin-right: 0; }
  .kids .row::before { content: ""; position: absolute; left: 0; top: 8px; width: 10px; border-top: 1px dotted #888; }
  .lab { display: flex; gap: 4px; height: 16px; }
  .lab.cur { background: #d6d6d6; }
  .mini { width: 14px; height: 14px; margin-left: -4px; flex: none; }
  em { font: 700 9px/9px "Open Sans", sans-serif; background: #ffe800; align-self: flex-start; margin-left: -2px; }

  .work { flex: 1; min-width: 0; display: flex; flex-direction: column; margin-left: 6px; }
  .lower { height: 28px; padding-left: 4px; gap: 6px; }
  .lower .tool .caret { margin-left: 0; }
  .lower label { margin: 0 -2px 0 -3px; }
  .combo { display: flex; align-items: center; height: 22px; width: 61px; padding-right: 3px; background: #fff; }
  .combo select { appearance: none; border: 0; background: none; flex: 1; min-width: 0; padding: 0 0 0 2px; outline: 0; }
  .cols { flex: 1; display: flex; min-height: 0; background: #f0f0f0; }
  .members { width: 184px; flex: none; display: flex; flex-direction: column; background: #fff; border-right: 2px solid #999; padding-bottom: 1px; }
  .find { display: flex; align-items: center; gap: 4px; height: 31px; padding: 5px 4px 0 1px; border-bottom: 1px solid #a0a0a0; }
  .find input { flex: 1; min-width: 0; height: 24px; border: 1px solid #777; padding: 0 2px 2px; }
  .find button { height: 16px; }
  .listbox { flex: 1; display: flex; border: 1px solid #828790; }
  ul { flex: 1; margin: 1px 0 0; padding: 0; list-style: none; }
  li { position: relative; height: 16px; padding-left: 41px; }
  li::before { content: ""; position: absolute; left: 31px; top: 0; width: 12px; height: 9px; border: 1px dotted #888; border-width: 0 0 1px 1px; }
  li:not(:last-child)::after { content: ""; position: absolute; left: 31px; top: 9px; height: 7px; border-left: 1px dotted #888; }
  li button { display: flex; height: 16px; gap: 5px; padding: 0 4px 0 0; font: 10px/16px "DejaVu Sans Mono", monospace; }
  li .cur { background: #316ac5; }
  .scroll { width: 15px; display: flex; flex-direction: column; align-items: center; gap: 4px; padding: 5px 0; background: #f0f0f0; }
  .track { flex: 1; width: 15px; display: flex; flex-direction: column; justify-content: flex-end; }
  .thumb { height: 35%; background: #cdcdcd; }

  .attrs { flex: 1; min-width: 0; display: flex; flex-direction: column; background: #fff; margin-left: 3px; border-left: 1px solid #ddd; padding-bottom: 3px; }
  .tabline { height: 22px; border-bottom: 1px solid #dcdcdc; display: flex; }
  .proptab { width: 63px; height: 22px; background: #fff; border: 1px solid #d9d9d9; border-bottom: 0; padding-right: 2px; }
  .sheet { flex: 1; display: flex; align-items: flex-start; border: 1px solid #a0a0a0; margin: 3px 4px 0 3px; }
  table { flex: 1; table-layout: fixed; width: 100px; border-collapse: collapse; }
  .c1 { width: 22px; } .c2 { width: 190px; }
  th { font-weight: 400; padding: 0; background: linear-gradient(#fff, #ececec); border: 1px solid #c0c0c0; border-left: 0; text-align: center; }
  thead tr { height: 24px; }
  tbody tr { height: 19px; }
  td { position: relative; border: 1px solid #c0c0c0; padding: 0 0 0 19px; line-height: 16px; }
  .sel td { background: #0078d7; color: #fff; }
  .sel th { background: #ffd48a; }
  .blue td { color: #00f; }
  .dim td { color: #808080; }
  .exp { position: absolute; left: 2px; top: 3px; width: 12px; height: 12px; border: 1px solid #b0b0b0; color: #000; font: 14px/10px "Liberation Sans", sans-serif; text-align: center; }
  .outer { align-self: stretch; padding: 3px 0; width: 17px; }
  .outer .track { background: #cdcdcd; max-height: 382px; margin-bottom: auto; width: 17px; }

  .dialog { position: absolute; left: 527px; right: 22px; top: 50px; bottom: 2px; display: flex; flex-direction: column; padding: 0 7px 8px; border: 1px solid #282828; background: linear-gradient(#98b4d2, #b9d1ea 30px); }
  h2 { margin: 0; height: 29px; font: inherit; line-height: 36px; }
  .inner { flex: 1; display: flex; flex-direction: column; background: #f0f0f0; }
  .tabs { display: flex; align-items: flex-end; height: 21px; padding-left: 1px; }
  .tabs button { width: 41px; height: 19px; border: 1px solid #d0d0d0; border-bottom: 0; }
  .tabs .on { width: 46px; height: 21px; background: #fff; padding-right: 6px; }
  .pane { flex: 1; display: flex; flex-direction: column; align-items: flex-start; margin-right: 2px; border: solid #fff; border-width: 3px 2px 2px 5px; box-shadow: 1px 1px #d5d5d5; }
  .d1, .d2 { height: 28px; gap: 7px; padding: 0 6px; }
  .d1 .sep, .d2 .sep { margin: 0 -1px; }
  .d1 .tool .caret { margin-left: 4px; }
  .spec { width: 74px; }
  .pressed { border: 1px solid #0078d7; background: #dcebf7; padding: 0 3px; height: 23px; }
  .d1 .pressed { margin: 0 -2px 0 -3px; }
  .d2 > span { margin: 0 -8px 0 -2px; }
  .d2 .pressed { margin: 0 -2px 0 3px; padding: 0 4px; }
  .canvas { align-self: stretch; margin-top: 1px; border: 2px solid #f00; background: #14171e; }
  .canvas svg { display: block; width: 100%; }
  .axis path { stroke: #343b45; fill: none; }
  .axis .k { stroke: #000; }
  .axis .g { stroke-dasharray: 9 3 2 3; }
  .green path { fill: none; stroke: #6fc05c; }
  .blue { fill: none; stroke: #a8d0f4; stroke-dasharray: 3 3; }
  .gt, .wt { text-anchor: middle; font: 11px "Open Sans", sans-serif; fill: #fff; }
  .gt { fill: #3a414b; font-size: 12px; }
  .snap { display: flex; align-items: center; margin-top: 2px; }
  .d3 { height: 26px; gap: 7px; padding: 0 4px; margin-left: 3px; }
  .dstatus { display: flex; height: 22px; margin-top: 3px; gap: 2px; background: linear-gradient(#fff, #f0f0f0); }
  .dstatus span { border: 1px solid #d5d5d5; padding: 2px 4px; width: 98px; }
  .dstatus span + span { flex: 1; padding: 2px 1px; }
  .dstatus svg { align-self: flex-end; margin-left: -16px; }

  .status { display: flex; gap: 2px; height: 23px; padding: 2px 0 1px; background: #fff; }
  .status span { border: 1px solid #d0d0d0; padding: 0 1px; line-height: 19px; background: linear-gradient(#fff, #f0f0f0); }
  .s1 { width: 148px; } .s2 { width: 78px; } .s3 { width: 98px; } .s4 { width: 48px; } .s5 { flex: 1; } .s6 { width: 70px; }

  .taskbar { display: flex; height: 40px; background: #010c10; color: #fff; }
  .start { width: 48px; background: #000; display: grid; place-items: center; }
  .cortana { width: 344px; background: #333; display: flex; align-items: center; padding: 0 14px 0 9px; gap: 4px; }
  .cortana input { flex: 1; min-width: 0; background: none; border: 0; color: #ccc; font-size: 14px; padding: 0 1px; outline: 0; }
  .cortana input::placeholder { color: #a0a0a0; }
  .find input::placeholder { color: #808080; }
  .apps { display: flex; }
  .apps button { width: 50px; display: grid; place-items: center; }
  .apps svg { width: 24px; height: 24px; }
  .apps .run { box-shadow: inset 0 -2px #76b9ed; }
  .apps .active { background: #343c42; }
  .tray { margin-left: auto; display: flex; align-items: center; }
  .links { margin-right: 19px; }
  .two { text-align: center; line-height: 17px; margin-right: 17px; }
  .s { margin-left: 12px; }
  .clock { margin: 0 23px 0 20px; line-height: 19px; }
  .note { height: 30px; }
  .peek { width: 5px; margin-left: 10px; align-self: stretch; border-left: 1px solid #666; }
</style>
